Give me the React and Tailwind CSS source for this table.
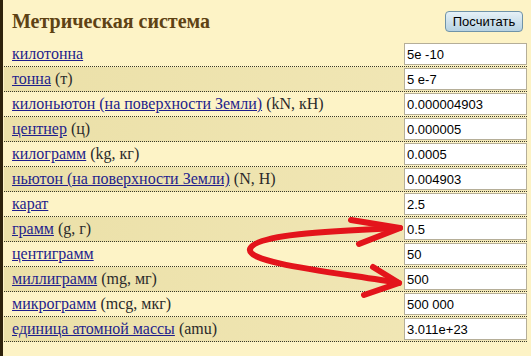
import React from "react";

const units = [
    { name: "килотонна", extra: "", value: "5e -10" },
    { name: "тонна", extra: "(т)", value: "5 e-7" },
    { name: "килоньютон (на поверхности Земли)", extra: "(kN, кН)", value: "0.000004903" },
    { name: "центнер", extra: "(ц)", value: "0.000005" },
    { name: "килограмм", extra: "(kg, кг)", value: "0.0005" },
    { name: "ньютон (на поверхности Земли)", extra: "(N, Н)", value: "0.004903" },
    { name: "карат", extra: "", value: "2.5" },
    { name: "грамм", extra: "(g, г)", value: "0.5" },
    { name: "центиграмм", extra: "", value: "50" },
    { name: "миллиграмм", extra: "(mg, мг)", value: "500" },
    { name: "микрограмм", extra: "(mcg, мкг)", value: "500 000" },
    { name: "единица атомной массы", extra: "(amu)", value: "3.011e+23" },
];

// hand-drawn red arrows pointing at 0.5 and 500
const Arrows = () => (
    <svg className="absolute left-0 top-0 pointer-events-none" width="531" height="356" viewBox="0 0 531 356">
        <g fill="none" stroke="#e3141b" strokeWidth="6" strokeLinecap="round" strokeLinejoin="round">
            <path d="M397 228 C330 231 252 234 247 249 C243 263 330 272 396 283" />
            <path d="M348 220 L397 228 L356 244" />
            <path d="M370 267 L396 283 L361 295" />
        </g>
    </svg>
);

export default function App() {
    return (
        <div className="relative w-[531px] h-[356px] bg-[#fdf3c6] border-l-[3px] border-[#2e220c] pl-[1px] pr-[4px] overflow-hidden font-['Liberation_Serif']">
            <div className="h-[42px] flex items-center justify-between pl-[8px] pr-[4px]">
                <h1 className="font-['Liberation_Serif'] text-[20px] font-bold text-[#5e4214]">
                    Метрическая система
                </h1>
                <button className="font-['Liberation_Sans'] h-[21px] w-[78px] rounded-[4px] border border-[#6f93a8] bg-gradient-to-b from-[#e6f1f7] to-[#b7d2e2] text-[13px] text-black">
                    Посчитать
                </button>
            </div>

            <div>
                {units.map((u, i) => (
                    <div
                        key={u.name}
                        className={`h-[25px] flex items-center justify-between pl-[8px] border-b border-dotted border-[#3a3a2a] ${i % 2 === 1 ? "bg-gradient-to-r from-[#ebe0a8] to-[#f2e8b8]" : ""}`}
                    >
                        <div className="font-['Liberation_Serif'] text-[16px] text-[#2a2a2a] whitespace-nowrap">
                            <a href="#" className="text-[#1e1e8c] underline">{u.name}</a>
                            {u.extra && <span> {u.extra}</span>}
                        </div>
                        <input
                            type="text"
                            defaultValue={u.value}
                            className="font-['Liberation_Sans'] w-[123px] h-[22px] bg-white border border-[#b5ae98] px-[2px] text-[13px] text-black outline-none"
                        />
                    </div>
                ))}
            </div>

            <Arrows />
        </div>
    );
}
